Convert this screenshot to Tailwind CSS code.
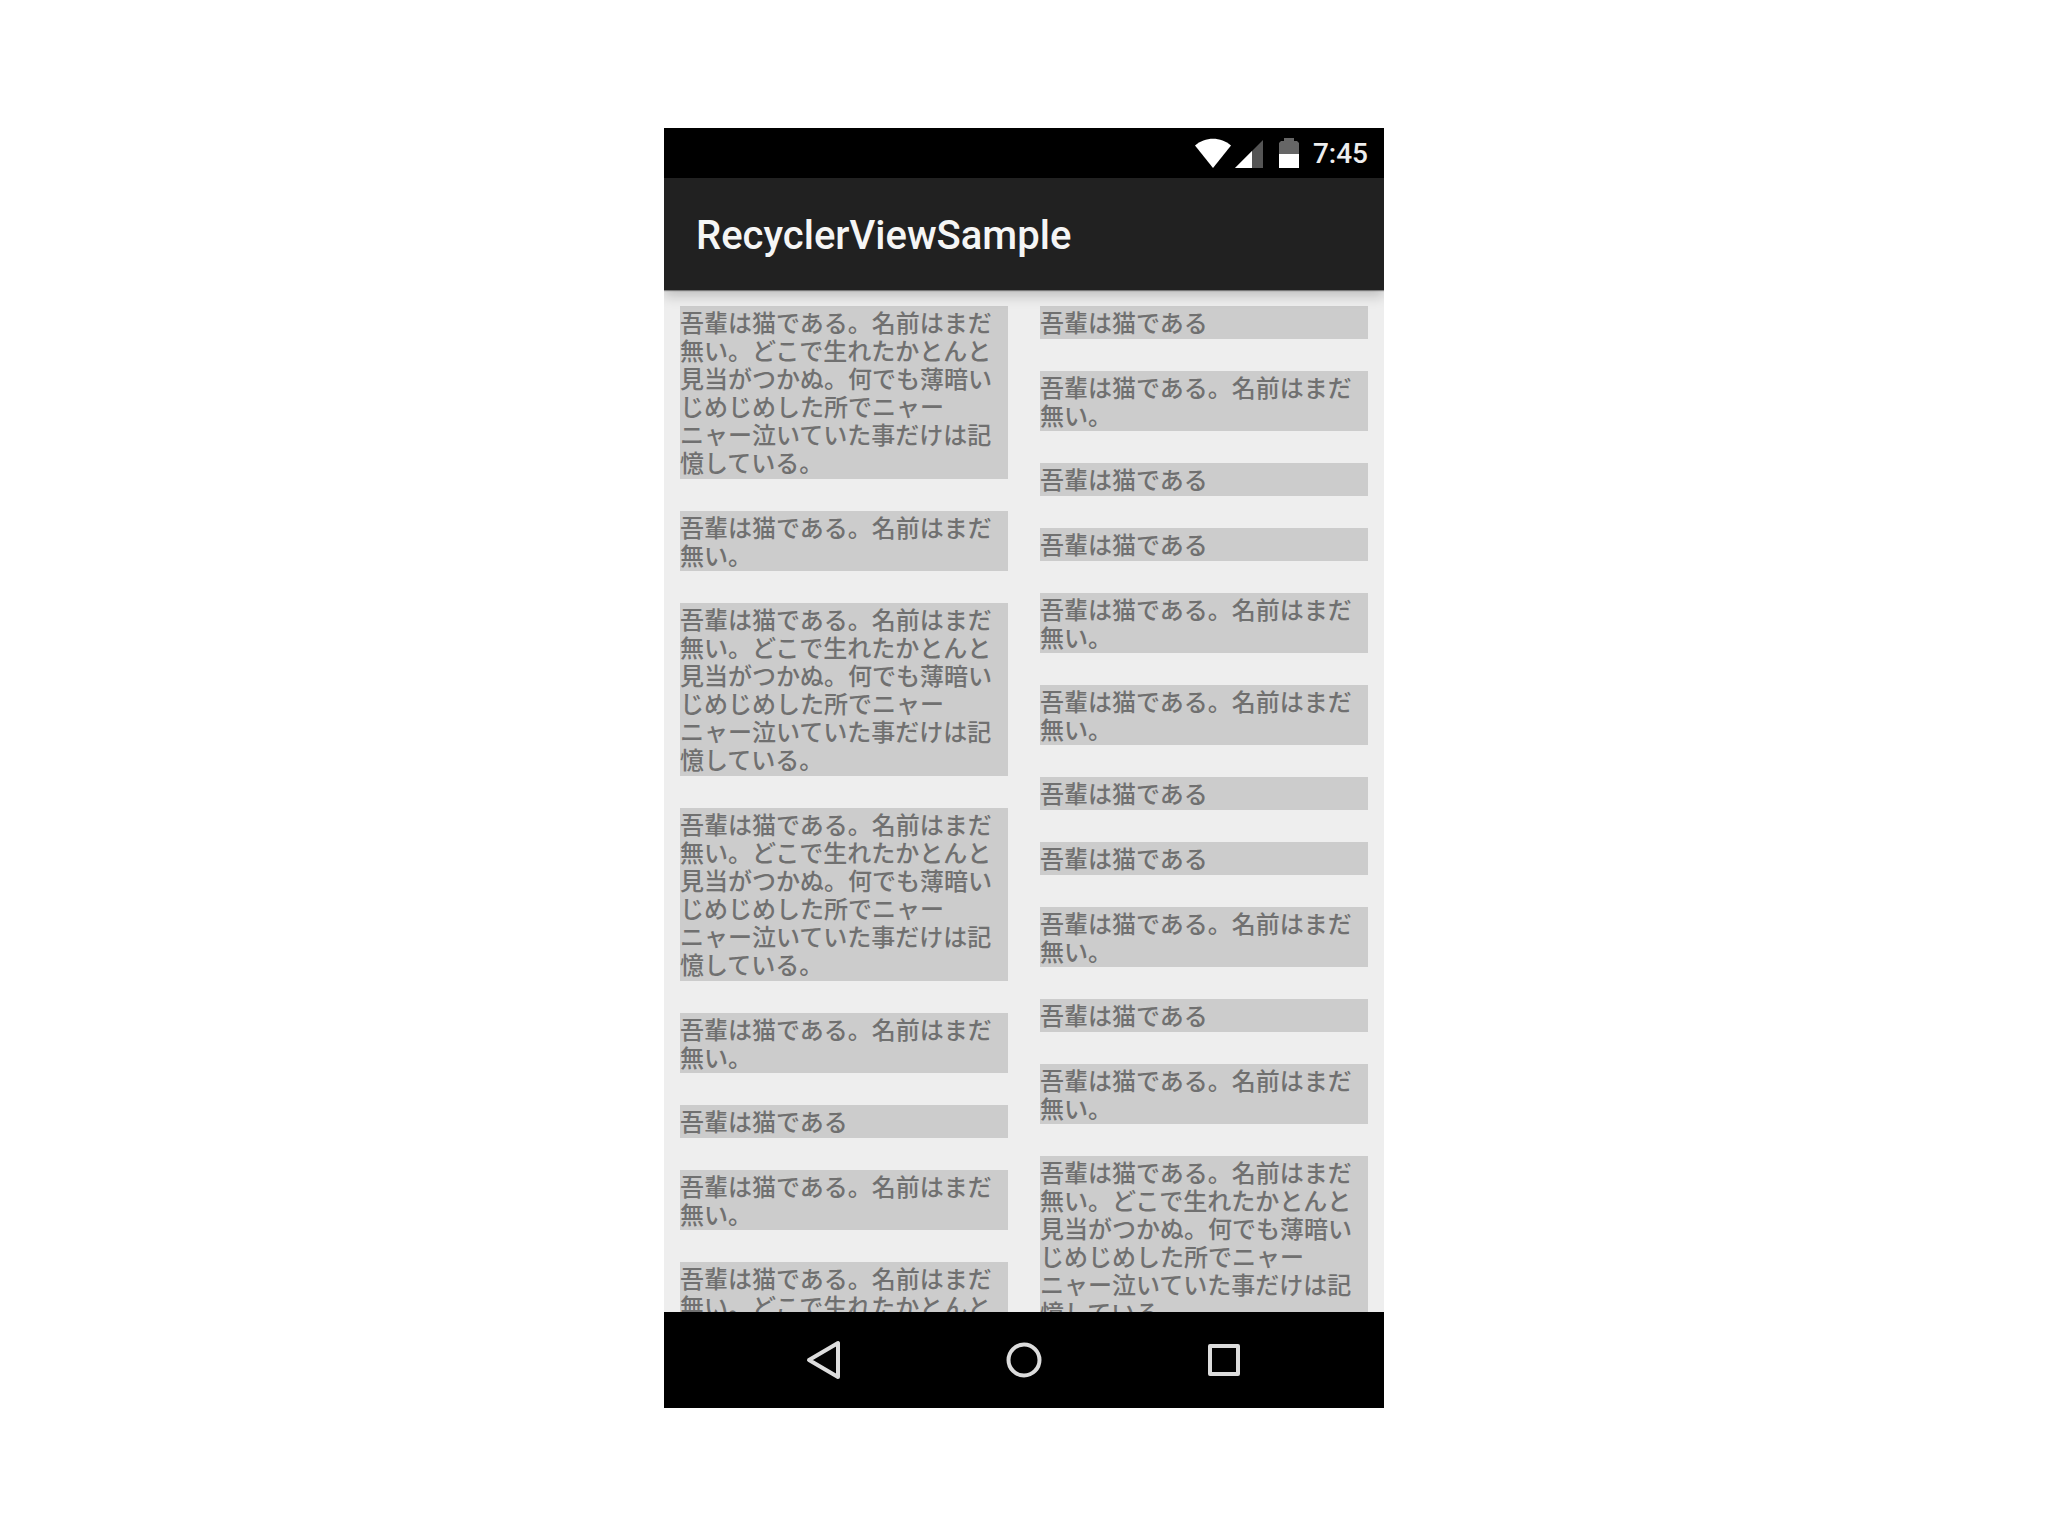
<!DOCTYPE html>
<html lang="ja">
<head>
    <meta charset="UTF-8">
    <meta name="viewport" content="width=device-width, initial-scale=1.0">
    <title>RecyclerViewSample</title>
    <script src="https://cdn.jsdelivr.net/npm/@tailwindcss/browser@4"></script>
</head>
<body class="bg-white h-screen p-32 font-['Roboto','Noto_Sans_CJK_JP',sans-serif]">
    <div class="flex flex-col w-full max-w-[720px] h-full mx-auto overflow-hidden bg-[#eeeeee]">

        <!-- Status bar -->
        <div class="flex items-center justify-end shrink-0 h-[50px] pt-0.5 pr-4 bg-black">
            <svg class="w-9 h-8" viewBox="0 0 36 32" fill="#fff" aria-hidden="true">
                <path d="M18 30 L0 7.500 C10 -1.500 26 -1.500 36 7.500 Z"/>
            </svg>
            <svg class="w-7 h-8 ml-1" viewBox="0 0 28 32" aria-hidden="true">
                <path d="M28 2 V30 H0 Z" fill="#555"/>
                <path d="M17 13 V30 H0 Z" fill="#fff"/>
            </svg>
            <svg class="w-5 h-8 ml-4" viewBox="0 0 20 32" aria-hidden="true">
                <path d="M5 0 H15 V3 H18 L20 5 V17 H0 V5 L2 3 H5 Z" fill="#666"/>
                <path d="M0 16 H20 V30 H0 Z" fill="#fff"/>
            </svg>
            <span class="ml-3.5 text-[28px] leading-8 font-medium text-[#eeeeee]">7:45</span>
        </div>

        <!-- App bar -->
        <header class="relative z-10 flex items-center shrink-0 h-28 px-8 pt-1 bg-[#212121] shadow-[0_1px_1px_rgba(0,0,0,0.4),0_6px_12px_rgba(0,0,0,0.2)]">
            <h1 class="text-[40px] leading-12 font-medium text-[#f5f5f5]">RecyclerViewSample</h1>
        </header>

        <!-- Staggered list, cut off by the navigation bar -->
        <main class="grid grid-cols-2 gap-8 flex-1 min-h-0 overflow-hidden px-4 pt-4">
            <ul id="leftColumn" class="flex flex-col gap-8"></ul>
            <ul id="rightColumn" class="flex flex-col gap-8"></ul>
        </main>

        <!-- Navigation bar -->
        <nav class="relative z-10 flex items-center justify-center shrink-0 h-24 bg-black">
            <button type="button" aria-label="Back" class="flex justify-center w-[200px]">
                <svg class="w-12 h-12" viewBox="0 0 48 48" fill="none" stroke="#dcdcdc" stroke-width="4" stroke-linejoin="round">
                    <path d="M38 7 V41 L9 24 Z"/>
                </svg>
            </button>
            <button type="button" aria-label="Home" class="flex justify-center w-[200px]">
                <svg class="w-12 h-12" viewBox="0 0 48 48" fill="none" stroke="#dcdcdc" stroke-width="4">
                    <circle cx="24" cy="24" r="15.500"/>
                </svg>
            </button>
            <button type="button" aria-label="Recents" class="flex justify-center w-[200px]">
                <svg class="w-12 h-12" viewBox="0 0 48 48" fill="none" stroke="#dcdcdc" stroke-width="4" stroke-linejoin="round">
                    <rect x="10" y="10" width="28" height="28"/>
                </svg>
            </button>
        </nav>
    </div>

    <script>
        const short = '吾輩は猫である';
        const medium = '吾輩は猫である。名前はまだ無い。';
        const long = '吾輩は猫である。名前はまだ無い。どこで生れたかとんと見当がつかぬ。何でも薄暗いじめじめした所でニャーニャー泣いていた事だけは記憶している。';

        function renderColumn(id, items) {
            const column = document.getElementById(id);
            items.forEach(text => {
                const item = document.createElement('li');
                item.className = 'shrink-0 min-h-[33px] pt-1 bg-[#cccccc] text-2xl leading-7 font-medium text-[#707070] [line-break:strict]';
                if (text === long) {
                    item.classList.add('pb-px');
                }
                item.textContent = text;
                column.appendChild(item);
            });
        }

        renderColumn('leftColumn', [long, medium, long, long, medium, short, medium, long]);
        renderColumn('rightColumn', [short, medium, short, short, medium, medium, short, short, medium, short, medium, long]);
    </script>
</body>
</html>
